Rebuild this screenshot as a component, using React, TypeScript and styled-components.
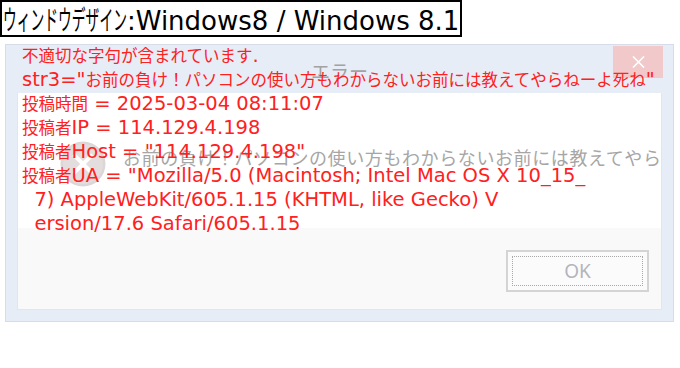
import styled, { createGlobalStyle } from "styled-components";

const GlobalStyle = createGlobalStyle`
    body {
        margin: 0;
        background: #ffffff;
    }
`;

const Page = styled.div`
    position: relative;
    width: 680px;
    height: 368px;
    overflow: hidden;
    font-family: "Noto Sans CJK JP", sans-serif;
`;

const Caption = styled.div`
    width: fit-content;
    border: 2px solid #000;
    padding: 0 1px;
    height: 33px;
    line-height: 33px;
    white-space: nowrap;
    color: #000;
`;

const CaptionKana = styled.span`
    display: inline-block;
    font-size: 27px;
    transform: scaleX(0.51);
    transform-origin: 0 50%;
    margin-right: -119px;
`;

const CaptionLatin = styled.span`
    font-family: "DejaVu Sans", sans-serif;
    font-size: 26px;
`;

const Dialog = styled.div`
    box-sizing: border-box;
    margin: 7px 0 0 5px;
    width: 669px;
    height: 278px;
    border: 1px solid #d6dde8;
    background: #e6edf7;
    display: flex;
    flex-direction: column;
`;

const TitleBar = styled.div`
    height: 48px;
    display: grid;
    grid-template-columns: 1fr auto 1fr;
    align-items: center;
`;

const Title = styled.div`
    grid-column: 2;
    margin-top: 3px;
    font-size: 19px;
    color: #a2a2a2;
`;

const CloseButton = styled.div`
    grid-column: 3;
    justify-self: end;
    align-self: start;
    margin: 1px 10px 0 0;
    width: 50px;
    height: 32px;
    background: #f1c9ca;
    display: flex;
    align-items: center;
    justify-content: center;
`;

const Body = styled.div`
    flex: 1;
    margin: 0 11px 11px;
    display: flex;
    flex-direction: column;
    border: 1px solid #e0e6ef;
    border-top: none;
`;

const MessageArea = styled.div`
    height: 135px;
    background: #ffffff;
    display: flex;
    align-items: flex-start;
    gap: 17px;
    padding: 48px 0 0 42px;
    box-sizing: border-box;
    overflow: hidden;
    white-space: nowrap;
`;

const IconBox = styled.div`
    flex: none;
    width: 46px;
    height: 46px;
`;

const Message = styled.div`
    margin-top: 4px;
    font-size: 18px;
    letter-spacing: 0.6px;
    line-height: 24px;
    color: #a6a6a6;
`;

const ButtonBar = styled.div`
    flex: 1;
    background: #f9f9f9;
    display: flex;
    justify-content: flex-end;
    align-items: flex-start;
    padding: 22px 12px 0 0;
`;

const OkButton = styled.div`
    box-sizing: border-box;
    width: 143px;
    height: 42px;
    border: 2px solid #d4d4d4;
    background: #fbfbfb;
    padding: 4px;
`;

const FocusRing = styled.div`
    height: 100%;
    box-sizing: border-box;
    border: 1px dotted #a8a8a8;
    display: flex;
    align-items: center;
    justify-content: center;
    font-family: "Noto Sans", sans-serif;
    font-size: 19px;
    color: #b3b4be;
`;

const Overlay = styled.div`
    position: absolute;
    left: 22px;
    top: 42.5px;
    color: #ff2020;
    pointer-events: none;
`;

const Line = styled.div`
    height: 24.1px;
    line-height: 24.1px;
    font-size: 16.5px;
    white-space: pre;
`;

const Latin = styled.span`
    font-family: "DejaVu Sans", sans-serif;
    font-size: 19.5px;
    line-height: 24.1px;
`;

// split a line into ascii runs (meiryo-like wide latin) and japanese runs
const mixed = (text: string) =>
    text.split(/([\x20-\x7e]+)/).map((part, i) =>
        i % 2 === 1 ? <Latin key={i}>{part}</Latin> : part
    );

const report = [
    "不適切な字句が含まれています.",
    "str3=\"お前の負け！パソコンの使い方もわからないお前には教えてやらねーよ死ね\"",
    "投稿時間 = 2025-03-04 08:11:07",
    "投稿者IP = 114.129.4.198",
    "投稿者Host = \"114.129.4.198\"",
    "投稿者UA = \"Mozilla/5.0 (Macintosh; Intel Mac OS X 10_15_",
    "  7) AppleWebKit/605.1.15 (KHTML, like Gecko) V",
    "  ersion/17.6 Safari/605.1.15",
];

const ErrorIcon = () => (
    <IconBox>
        <svg width="46" height="46" viewBox="0 0 46 46">
            <circle cx="23" cy="23" r="22.5" fill="#dcd6d6" />
            <circle cx="23" cy="23" r="20" fill="#e3dddd" />
            <path d="M15 15 L31 31 M31 15 L15 31" stroke="#ffffff" strokeWidth="4" strokeLinecap="square" />
        </svg>
    </IconBox>
);

const App = () => {
    return (
        <Page>
            <GlobalStyle />
            <Caption>
                <CaptionKana>ウィンドウデザイン</CaptionKana>
                <CaptionLatin>:Windows8 / Windows 8.1</CaptionLatin>
            </Caption>
            <Dialog>
                <TitleBar>
                    <Title>エラー</Title>
                    <CloseButton>
                        <svg width="13" height="12" viewBox="0 0 13 12">
                            <path d="M1 0.5 L12 11.5 M12 0.5 L1 11.5" stroke="#ffffff" strokeWidth="1.6" />
                        </svg>
                    </CloseButton>
                </TitleBar>
                <Body>
                    <MessageArea>
                        <ErrorIcon />
                        <Message>お前の負け！パソコンの使い方もわからないお前には教えてやらねーよ死ね</Message>
                    </MessageArea>
                    <ButtonBar>
                        <OkButton>
                            <FocusRing>OK</FocusRing>
                        </OkButton>
                    </ButtonBar>
                </Body>
            </Dialog>
            <Overlay>
                {report.map((text, i) => (
                    <Line key={i}>{mixed(text)}</Line>
                ))}
            </Overlay>
        </Page>
    );
};

export default App;
